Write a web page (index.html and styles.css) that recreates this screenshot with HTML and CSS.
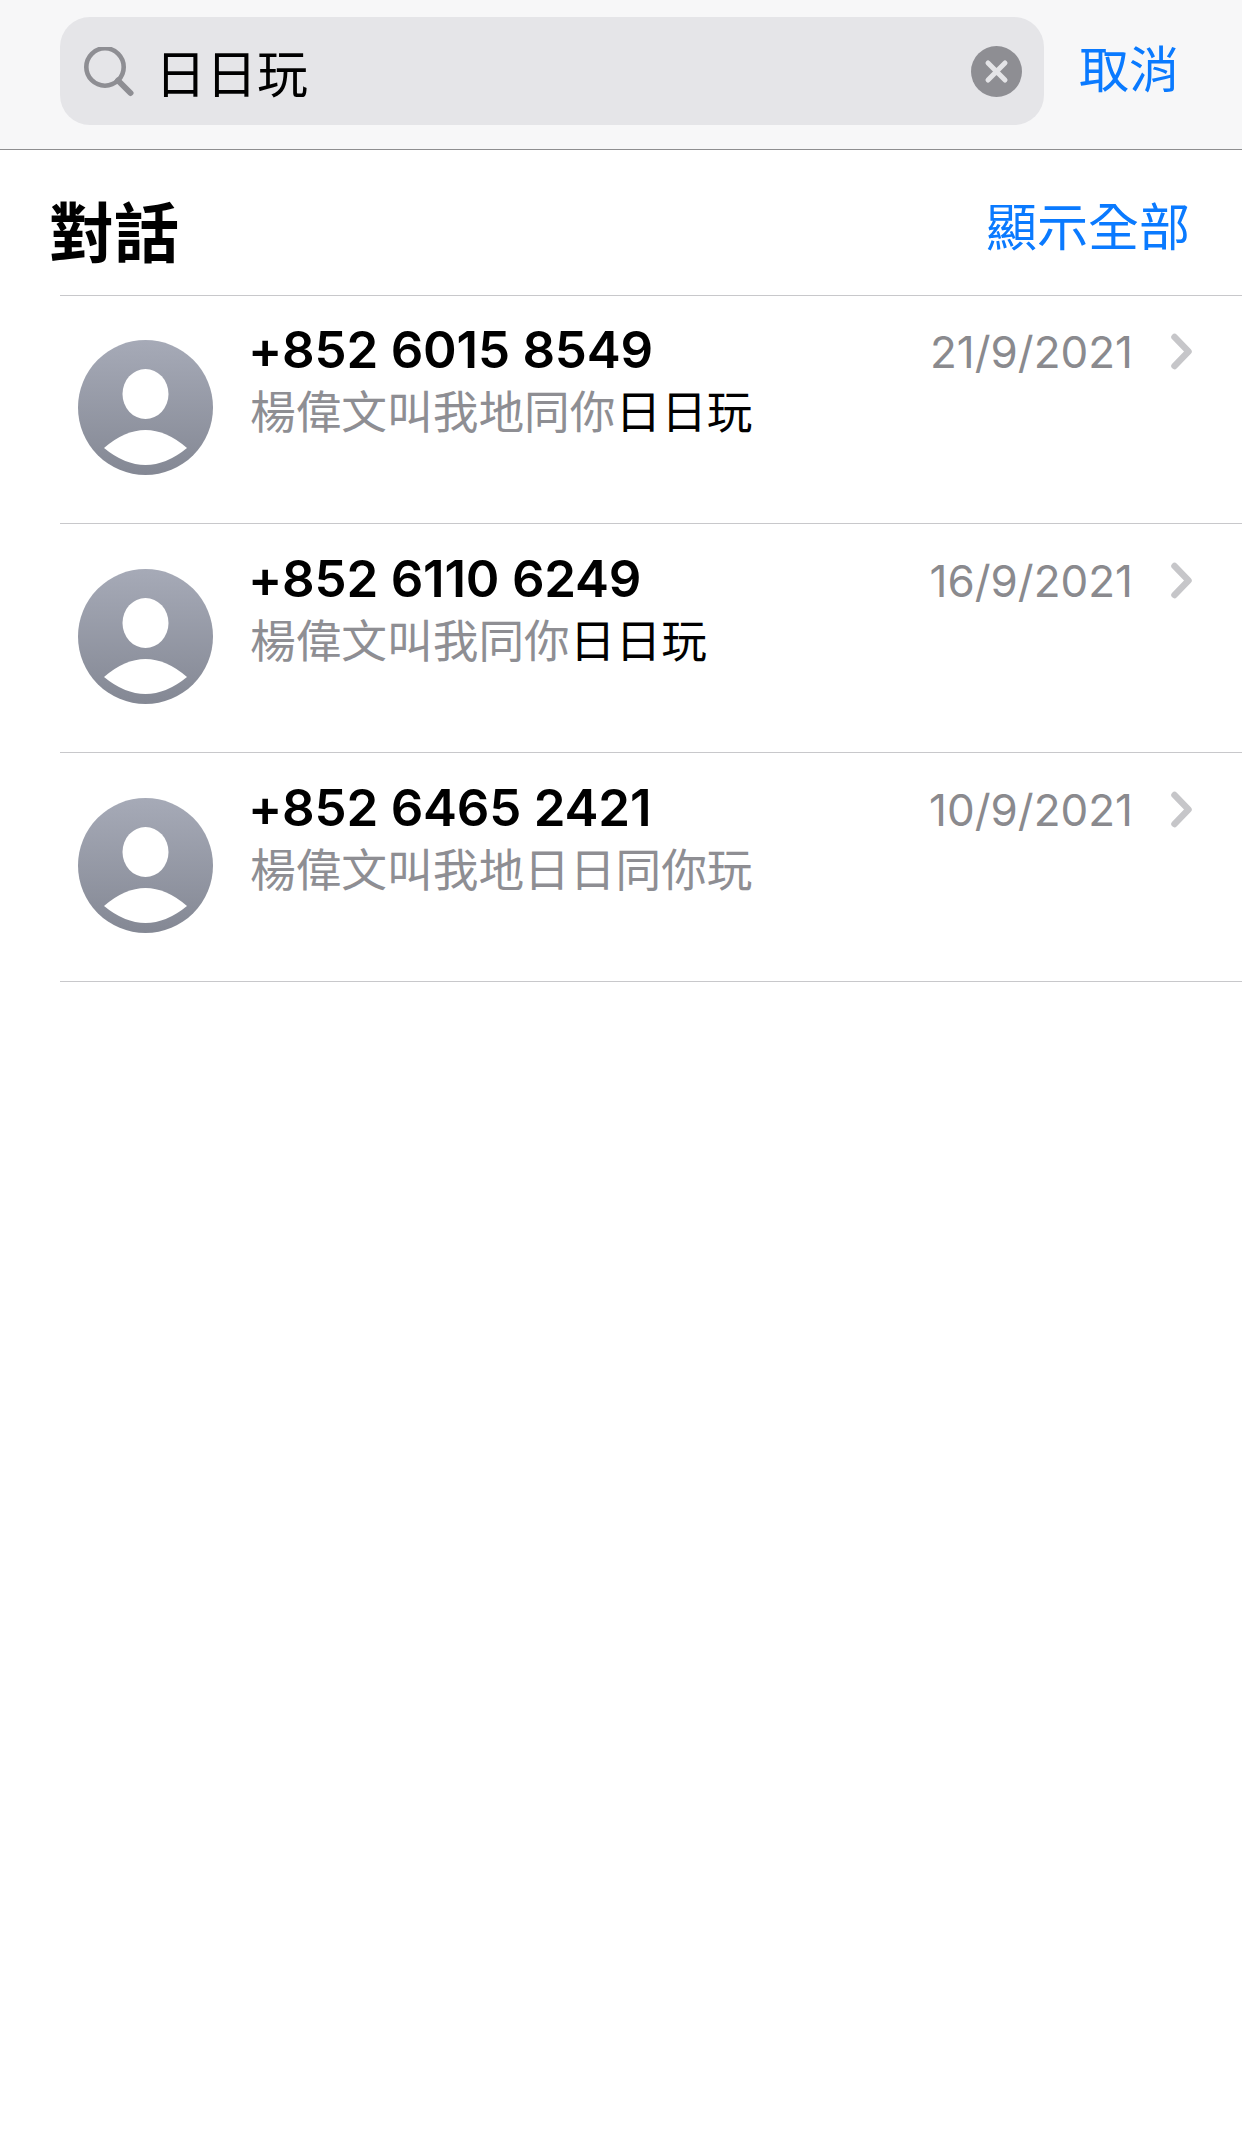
FILE: index.html
```html
<!DOCTYPE html>
<html lang="zh-Hant">
<head>
    <meta charset="UTF-8">
    <meta name="viewport" content="width=device-width, initial-scale=1.0">
    <title>Messages search</title>
    <link rel="stylesheet" href="styles.css">
</head>
<body>
    <svg class="defs" width="0" height="0">
        <defs>
            <linearGradient id="avatarFill" x1="0" y1="0" x2="0" y2="1">
                <stop offset="0" stop-color="#a6aab7"/>
                <stop offset="1" stop-color="#848894"/>
            </linearGradient>
            <symbol id="avatar" viewBox="0 0 135 135">
                <circle cx="67.5" cy="67.5" r="67.5" fill="url(#avatarFill)"/>
                <ellipse cx="67.5" cy="54" rx="23" ry="25" fill="#fff"/>
                <path d="M26 108 Q67.5 72 109 108 Q67.5 142 26 108 Z" fill="#fff"/>
            </symbol>
            <symbol id="chevron" viewBox="0 0 24 38">
                <path d="M4.5 4 L18.5 18.5 L4.5 33" fill="none" stroke="#c6c6c9" stroke-width="6.5" stroke-linecap="round" stroke-linejoin="round"/>
            </symbol>
        </defs>
    </svg>

    <header class="search-bar">
        <div class="search-field">
            <svg class="search-icon" width="50" height="50" viewBox="0 0 50 50">
                <circle cx="21" cy="20" r="18.7" fill="none" stroke="#8e8e93" stroke-width="4.6"/>
                <path d="M34 33.5 L46.5 46" fill="none" stroke="#8e8e93" stroke-width="6" stroke-linecap="round"/>
            </svg>
            <span class="search-text">日日玩</span>
            <svg class="clear-icon" width="51" height="51" viewBox="0 0 51 51">
                <circle cx="25.5" cy="25.5" r="25.5" fill="#8e8e93"/>
                <path d="M17 17 L34 34 M34 17 L17 34" fill="none" stroke="#e4e4e7" stroke-width="5" stroke-linecap="round"/>
            </svg>
        </div>
        <span class="cancel">取消</span>
    </header>

    <section class="section-head">
        <h2>對話</h2>
        <span class="show-all">顯示全部</span>
    </section>

    <ul class="results">
        <li class="row">
            <svg class="avatar"><use href="#avatar"/></svg>
            <div class="row-body">
                <div class="row-top">
                    <span class="phone">+852 6015 8549</span>
                    <span class="date">21/9/2021</span>
                    <svg class="chevron"><use href="#chevron"/></svg>
                </div>
                <p class="preview">楊偉文叫我地同你<em>日日玩</em></p>
            </div>
        </li>
        <li class="row">
            <svg class="avatar"><use href="#avatar"/></svg>
            <div class="row-body">
                <div class="row-top">
                    <span class="phone">+852 6110 6249</span>
                    <span class="date">16/9/2021</span>
                    <svg class="chevron"><use href="#chevron"/></svg>
                </div>
                <p class="preview">楊偉文叫我同你<em>日日玩</em></p>
            </div>
        </li>
        <li class="row">
            <svg class="avatar"><use href="#avatar"/></svg>
            <div class="row-body">
                <div class="row-top">
                    <span class="phone">+852 6465 2421</span>
                    <span class="date">10/9/2021</span>
                    <svg class="chevron"><use href="#chevron"/></svg>
                </div>
                <p class="preview">楊偉文叫我地日日同你玩</p>
            </div>
        </li>
    </ul>
</body>
</html>
```

FILE: styles.css
```css
body {
    margin: 0;
    height: 2141px;
    overflow: hidden;
    background-color: #fff;
    color: #000;
    font-family: Inter, "Noto Sans CJK TC", sans-serif;
}
.defs {
    display: block;
    height: 0;
}
.search-bar {
    display: flex;
    align-items: flex-start;
    box-sizing: border-box;
    height: 150px;
    padding: 17px 0 0 60px;
    background-color: #f7f7f8;
    border-bottom: 1px solid #8e8e90;
}
.search-field {
    display: flex;
    align-items: center;
    box-sizing: border-box;
    width: 984px;
    height: 108px;
    padding: 0 22px 0 24px;
    background-color: #e5e5e8;
    border-radius: 30px;
}
.search-icon {
    flex: none;
    margin-top: 2px;
}
.search-text {
    flex: 1;
    margin-left: 21px;
    font-family: "Noto Sans CJK TC", sans-serif;
    font-size: 51px;
    line-height: 108px;
}
.clear-icon {
    flex: none;
}
.cancel {
    margin: -1px 0 0 35px;
    color: #0a7aff;
    font-family: "Noto Sans CJK TC", sans-serif;
    font-size: 50px;
    line-height: 100px;
}
.section-head {
    display: flex;
    justify-content: space-between;
    align-items: flex-start;
    height: 145px;
    padding: 0 52px 0 49px;
}
.section-head h2 {
    margin: 34px 0 0;
    font-family: "Noto Sans CJK TC", sans-serif;
    font-size: 65px;
    font-weight: 700;
    line-height: 90px;
}
.show-all {
    margin-top: 36px;
    color: #0a7aff;
    font-family: "Noto Sans CJK TC", sans-serif;
    font-size: 51px;
    line-height: 76px;
}
.results {
    margin: 0 0 0 60px;
    padding: 0;
    list-style: none;
    border-top: 1px solid #c8c8cb;
}
.row {
    display: flex;
    box-sizing: border-box;
    height: 229px;
    padding: 45px 48px 0 18px;
    border-bottom: 1px solid #c8c8cb;
}
.row:first-child {
    height: 228px;
    padding-top: 44px;
}
.avatar {
    flex: none;
    width: 135px;
    height: 135px;
}
.row-body {
    flex: 1;
    margin: -29px 0 0 35px;
}
.row-top {
    display: flex;
    align-items: center;
    height: 76px;
}
.phone {
    flex: 1;
    font-size: 51px;
    font-weight: 600;
    letter-spacing: -0.2px;
}
.date {
    margin-top: 6px;
    color: #8a8a8e;
    font-size: 44px;
}
.chevron {
    flex: none;
    width: 24px;
    height: 38px;
    margin: 6px 0 0 37px;
}
.preview {
    margin: -11px 0 0 2px;
    color: #8e8e93;
    font-family: "Noto Sans CJK TC", sans-serif;
    font-size: 45.7px;
    line-height: 66px;
}
.preview em {
    color: #000;
    font-style: normal;
}
```
